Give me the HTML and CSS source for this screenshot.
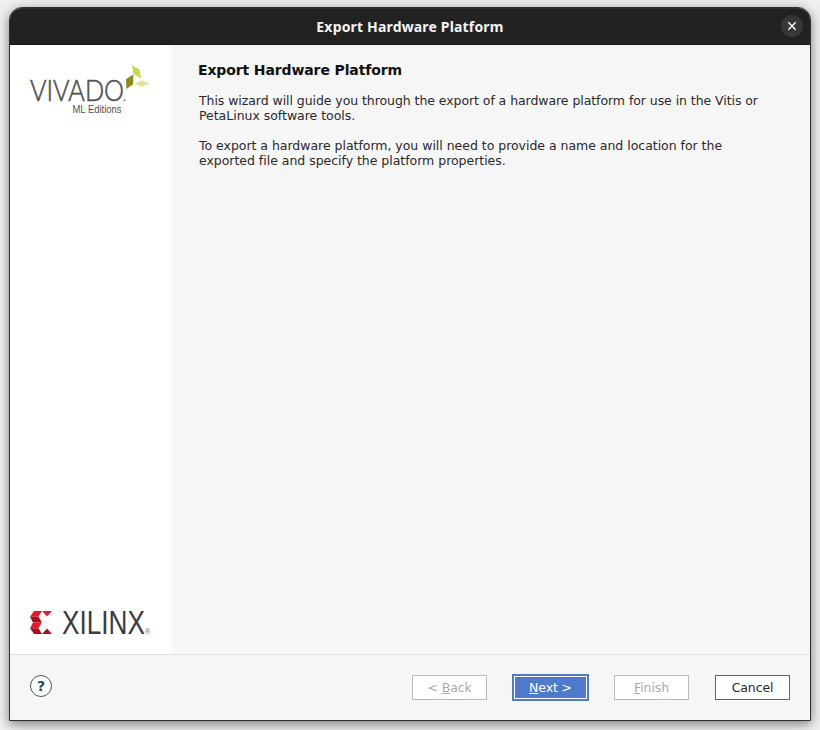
FILE: index.html
```html
<!DOCTYPE html>
<html lang="en">
<head>
<meta charset="utf-8">
<title>Export Hardware Platform</title>
<link rel="stylesheet" href="styles.css">
</head>
<body>
<div class="window">
  <header class="titlebar">
    <span class="titlebar-text">Export Hardware Platform</span>
    <button class="close" aria-label="Close">
      <svg width="10" height="10" viewBox="0 0 10 10"><path d="M1.3 1.3 8.7 8.7M8.7 1.3 1.3 8.7" stroke="#fff" stroke-width="1.4" fill="none"/></svg>
    </button>
  </header>
  <div class="body">
    <aside class="side">
      <svg class="vivado" width="132" height="58" viewBox="0 0 132 58">
        <text class="logo-text" x="10" y="43" font-size="29.5" textLength="94" lengthAdjust="spacingAndGlyphs">VIVADO</text>
        <circle cx="104.5" cy="42.3" r="1" fill="#777"/>
        <text class="logo-sub" x="52.5" y="54.5" font-size="10" textLength="49" lengthAdjust="spacingAndGlyphs">ML Editions</text>
        <path d="M112 7 119.5 11.5 121 20.5 113.5 16Z" fill="#c9d94f"/>
        <path d="M106 21 113.5 16.5 113 26.5 106.3 31Z" fill="#8f8a1c"/>
        <path d="M114 26 121.5 22.3 129.5 25.5 122 28.8Z" fill="#dde89a"/>
      </svg>
      <svg class="xilinx" width="136" height="36" viewBox="0 0 136 36">
        <path d="M14 5H22L18.5 10.8H10Z" fill="#e31b2f"/>
        <path d="M22 5H32L27 10.5Z" fill="#e31b2f"/>
        <path d="M10 10.8H18.5L22 16.5H13Z" fill="#a5131f"/>
        <path d="M13 16.5H22L18.5 22.2H10Z" fill="#e31b2f"/>
        <path d="M10 22.2H18.5L22 28H14Z" fill="#a5131f"/>
        <path d="M22 28 27 22.5 32 28Z" fill="#a5131f"/>
        <text class="xilinx-text" x="42" y="28" font-size="33" textLength="83" lengthAdjust="spacingAndGlyphs">XILINX</text>
        <text class="xilinx-mark" x="125" y="28" font-size="7">®</text>
      </svg>
    </aside>
    <main class="content">
      <h1>Export Hardware Platform</h1>
      <p><span class="tight">This wizard will guide you through the export of a hardware platform for use in the Vitis or</span><br>PetaLinux software tools.</p>
      <p>To export a hardware platform, you will need to provide a name and location for the<br>exported file and specify the platform properties.</p>
    </main>
  </div>
  <footer class="footer">
    <button class="help">?</button>
    <div class="actions">
      <button class="btn disabled">&lt; <u>B</u>ack</button>
      <button class="btn primary"><u>N</u>ext &gt;</button>
      <button class="btn disabled"><u>F</u>inish</button>
      <button class="btn">Cancel</button>
    </div>
  </footer>
</div>
</body>
</html>
```

FILE: styles.css
```css
* { box-sizing: border-box; }
body {
  margin: 0;
  height: 730px;
  padding: 7px 9px 9px;
  overflow: hidden;
  background: #f0f0f0;
  font-family: "DejaVu Sans", sans-serif;
  font-size: 12.5px;
  color: #2a2a2a;
}
button { font: inherit; padding: 0; }
.window {
  width: 802px;
  height: 714px;
  display: flex;
  flex-direction: column;
  border: 1px solid #303030;
  border-radius: 13px 13px 0 0;
  background: #f6f6f7;
  box-shadow: 0 3px 12px rgba(0, 0, 0, .5);
}
.titlebar {
  height: 37px;
  flex: none;
  display: grid;
  grid-template-columns: 29px 1fr 29px;
  align-items: center;
  background: #222;
  border-top: 1px solid #303030;
  border-bottom: 1px solid #181818;
  border-radius: 12px 12px 0 0;
}
.titlebar-text {
  grid-column: 2;
  text-align: center;
  color: #f4f4f4;
  font: bold 14px/20px "Noto Sans", sans-serif;
  letter-spacing: .17px;
}
.close {
  width: 22px;
  height: 22px;
  margin-top: -2px;
  display: grid;
  place-items: center;
  border: 0;
  border-radius: 50%;
  background: #373737;
}
.body { display: flex; height: 609px; flex: none; }
.side {
  width: 166px;
  display: flex;
  flex-direction: column;
  justify-content: space-between;
  padding: 13px 10px 12px;
  background: linear-gradient(90deg, #fff 157px, #f6f6f7 165px);
}
.side svg { overflow: visible; }
.logo-text { font-family: Lato, sans-serif; font-weight: 300; fill: #505154; stroke: #505154; stroke-width: .6px; }
.logo-sub { font-family: "Liberation Sans", sans-serif; fill: #505154; }
.xilinx-text { font-family: "Liberation Sans", sans-serif; fill: #3b3b3d; }
.xilinx-mark { font-family: "Liberation Sans", sans-serif; fill: #666; }
.content { padding: 16px 0 0 22px; }
h1 { margin: 0 0 14px; font-size: 14px; line-height: 18px; letter-spacing: -.12px; color: #111; }
p { margin: 0 0 15px 1px; line-height: 15px; letter-spacing: -.025px; white-space: nowrap; }
.tight { letter-spacing: -.065px; }
.footer {
  flex: 1;
  display: flex;
  justify-content: space-between;
  align-items: flex-start;
  padding: 19px 20px 0;
  border-top: 1px solid #e0e0e1;
}
.help {
  width: 22px;
  height: 22px;
  margin-top: 1px;
  border: 1px solid #555;
  border-radius: 50%;
  background: #fff;
  color: #2c4474;
  font-size: 14px;
  font-weight: bold;
  line-height: 20px;
}
.actions { display: flex; gap: 26px; }
.btn {
  width: 75px;
  height: 25px;
  margin-top: 1px;
  border: 1px solid #666;
  background: #fff;
  color: #2a2a2a;
  letter-spacing: -.1px;
}
.disabled { border-color: #bbb; color: #aaa; }
.primary {
  width: 77px;
  height: 27px;
  margin: 0 -1px;
  border: 2px solid #4f7acb;
  outline: 1px solid #fff;
  outline-offset: -3px;
  background: #4f7acb;
  color: #fff;
}
```
